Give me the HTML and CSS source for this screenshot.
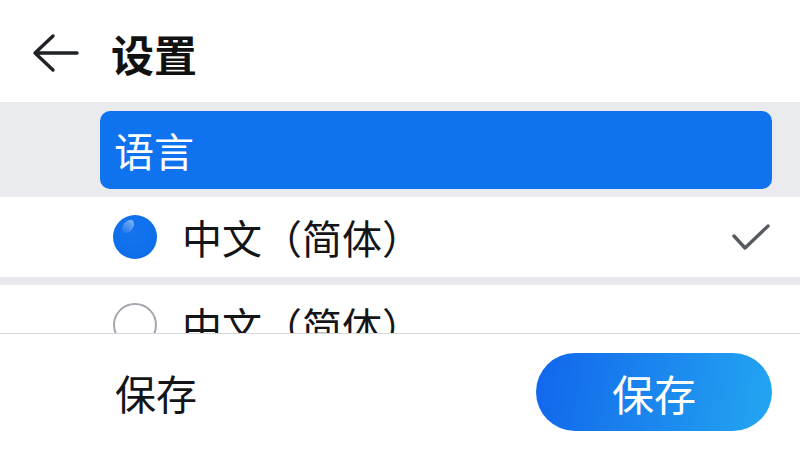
FILE: index.html
```html
<!DOCTYPE html>
<html lang="zh-CN">
<head>
    <meta charset="UTF-8">
    <meta name="viewport" content="width=device-width, initial-scale=1.0">
    <title>设置</title>
    <link rel="stylesheet" href="styles.css">
</head>
<body>
    <div class="page">
        <div class="header">
            <svg class="back" width="48" height="40" viewBox="0 0 48 40">
                <path d="M46 20 H4 M22 3 L4 20 L22 37" fill="none" stroke="#1f2226" stroke-width="3.4" stroke-linecap="round" stroke-linejoin="round"/>
            </svg>
            <h1 class="title">设置</h1>
        </div>
        <div class="list">
            <div class="section">
                <div class="section-title">语言</div>
            </div>
            <div class="option">
                <span class="radio checked"></span>
                <span class="option-label">中文（简体）</span>
                <svg class="check" width="38" height="28" viewBox="0 0 38 28">
                    <path d="M2 13 L13 25 L36 3" fill="none" stroke="#565a61" stroke-width="3.4" stroke-linecap="round" stroke-linejoin="round"/>
                </svg>
            </div>
            <div class="option">
                <span class="radio"></span>
                <span class="option-label">中文（简体）</span>
            </div>
        </div>
        <div class="footer">
            <span class="footer-label">保存</span>
            <button class="save-btn">保存</button>
        </div>
    </div>
</body>
</html>
```

FILE: styles.css
```css
body {
    margin: 0;
    padding: 0;
    background-color: #fff;
    font-family: "Noto Sans CJK SC", "Noto Sans", sans-serif;
    color: #141518;
}
.page {
    width: 800px;
    height: 450px;
    display: flex;
    flex-direction: column;
    overflow: hidden;
}
.header {
    height: 102px;
    flex-shrink: 0;
    display: flex;
    align-items: center;
    padding-left: 31px;
    box-sizing: border-box;
    padding-top: 4px;
}
.back {
    margin-right: 32px;
}
.title {
    margin: 0;
    font-size: 43px;
    font-weight: bold;
    line-height: 1;
    color: #111;
}
.list {
    flex: 1;
    overflow: hidden;
}
.section {
    background-color: #e9ebef;
    padding: 9px 28px 8px 100px;
}
.section-title {
    height: 78px;
    border-radius: 10px;
    background-color: #0f73f0;
    color: #fff;
    font-size: 40px;
    display: flex;
    align-items: center;
    padding-left: 14px;
}
.option {
    height: 80px;
    display: flex;
    align-items: center;
    padding: 0 30px 0 113px;
    background-color: #fff;
}
.option + .option {
    border-top: 8px solid #e7e9ed;
}
.radio {
    position: relative;
    width: 44px;
    height: 44px;
    box-sizing: border-box;
    border-radius: 50%;
    border: 2px solid #a4a8ae;
    margin-right: 25px;
    flex-shrink: 0;
}
.radio.checked {
    border: none;
    background: radial-gradient(circle at 45% 40%, #1573ee 0%, #0f6fea 60%, #0b65df 100%);
}
.radio.checked::after {
    content: "";
    position: absolute;
    left: 10px;
    top: 4px;
    width: 10px;
    height: 15px;
    border-radius: 50%;
    background: linear-gradient(180deg, rgba(255, 255, 255, 0.45), rgba(255, 255, 255, 0.05));
    transform: rotate(38deg);
}
.option-label {
    flex: 1;
    font-size: 40px;
    line-height: 1;
}
.footer {
    height: 117px;
    flex-shrink: 0;
    box-sizing: border-box;
    border-top: 1px solid #d5d8dd;
    background-color: #fff;
    display: flex;
    align-items: center;
    justify-content: space-between;
    padding: 0 28px 0 115px;
}
.footer-label {
    font-size: 41px;
    line-height: 1;
}
.save-btn {
    width: 236px;
    height: 78px;
    border: none;
    border-radius: 39px;
    background: linear-gradient(100deg, #1166ec 0%, #1b86ee 50%, #23a6f1 100%);
    color: #fff;
    font-family: "Noto Sans CJK SC", "Noto Sans", sans-serif;
    font-size: 42px;
    padding: 0;
    cursor: pointer;
}
```
